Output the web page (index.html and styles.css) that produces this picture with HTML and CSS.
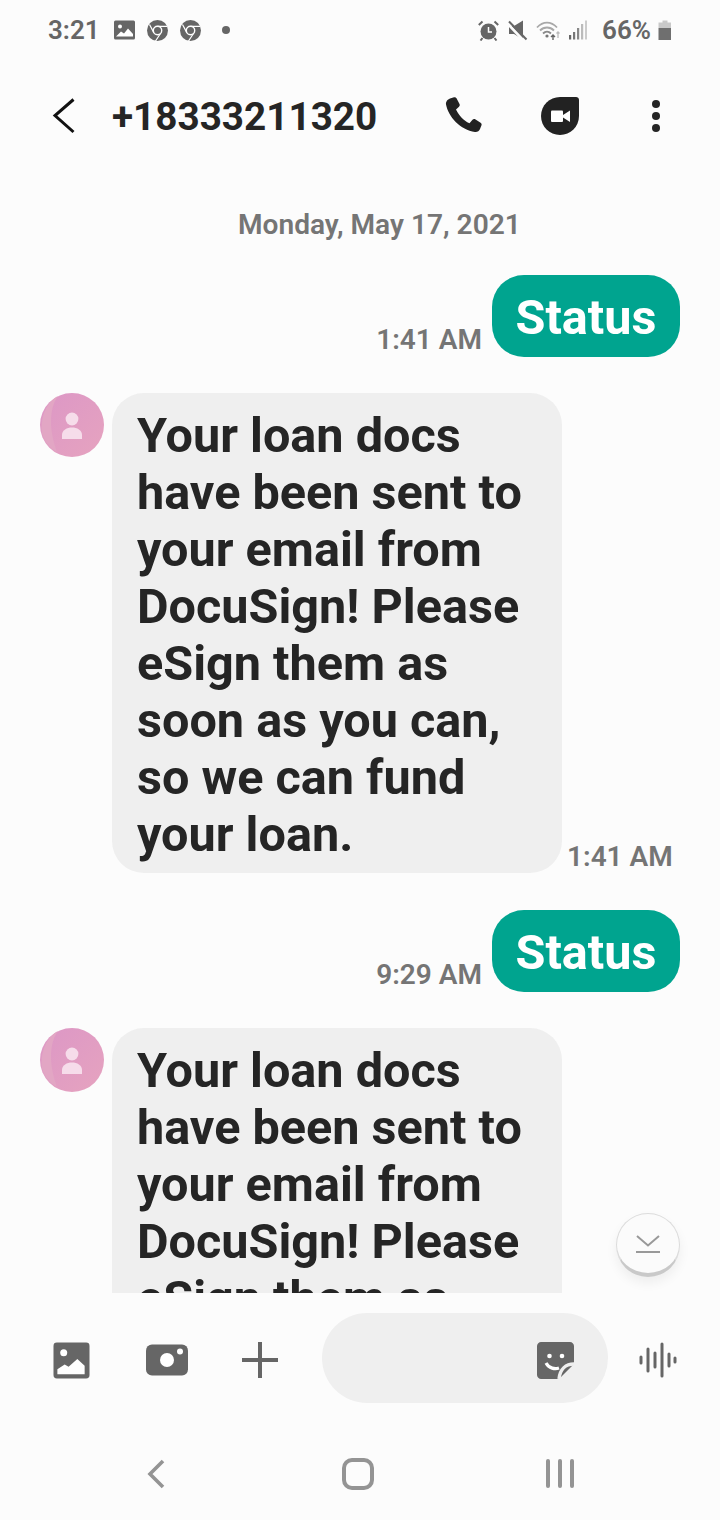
FILE: index.html
```html
<!DOCTYPE html>
<html lang="en">

<head>
    <meta charset="UTF-8">
    <meta name="viewport" content="width=device-width, initial-scale=1.0">
    <title>Messages</title>
    <link rel="stylesheet" href="styles.css">
</head>

<body>
    <div class="phone">

        <!-- status bar -->
        <div class="status-bar">
            <span class="clock">3:21</span>
            <svg class="notif notif-picture" width="21" height="20" viewBox="0 0 21 20">
                <rect width="21" height="19" y="0.5" rx="1.5" fill="#666" />
                <circle cx="6" cy="6.5" r="2" fill="#fff" />
                <path d="M2 16.5 L7 11.5 L10 13.5 L14 8.5 L19 14 V16.5 Z" fill="#fff" />
            </svg>
            <svg class="notif" width="21" height="21" viewBox="0 0 21 21">
                <use href="#chrome" />
            </svg>
            <svg class="notif" width="21" height="21" viewBox="0 0 21 21">
                <use href="#chrome" />
            </svg>
            <span class="dot"></span>
            <div class="status-right">
                <svg width="21" height="21" viewBox="0 0 21 21">
                    <circle cx="10.5" cy="11.5" r="8" fill="#666" />
                    <path d="M10.5 7 V12 H14" fill="none" stroke="#fff" stroke-width="1.5" />
                    <path d="M0.8 5 L4.5 1.5 M20.2 5 L16.5 1.5 M4.5 18 L2.5 20.5 M16.5 18 L18.5 20.5" stroke="#666" stroke-width="2" />
                </svg>
                <svg class="mute" width="20" height="21" viewBox="0 0 20 21">
                    <path d="M1 6 H6 L15 0.5 V19.5 L6 14 H1 Z" fill="#666" />
                    <path d="M0 4 L15 20" stroke="#fcfcfc" stroke-width="2.6" />
                    <path d="M1 1.5 L18.5 19.5" stroke="#666" stroke-width="2" />
                </svg>
                <svg class="wifi" width="26" height="21" viewBox="0 0 26 21">
                    <g fill="none" stroke="#a8a8a8" stroke-width="1.8">
                        <path d="M1 7.5 C7 1 15 1 21 7.5" />
                        <path d="M4 10.5 C8 6.5 14 6.5 18 10.5" />
                    </g>
                    <path d="M7 13.5 C9.5 11 12.5 11 15 13.5" fill="none" stroke="#8a8a8a" stroke-width="1.8" />
                    <circle cx="11" cy="16" r="1.6" fill="#777" />
                    <path d="M17 20 V15 M15 17 L17 15 L19 17" fill="none" stroke="#666" stroke-width="1.4" />
                    <path d="M22 18 V12 M20.5 13.5 L22 12 L23.5 13.5" fill="none" stroke="#bbb" stroke-width="1.3" />
                </svg>
                <svg class="signal" width="18" height="20" viewBox="0 0 18 20">
                    <rect x="0" y="15" width="2.2" height="4.5" fill="#666" />
                    <rect x="4" y="12" width="2.2" height="7.5" fill="#777" />
                    <rect x="8" y="8" width="2.2" height="11.5" fill="#888" />
                    <rect x="12" y="4" width="2.2" height="15.5" fill="#bbb" />
                    <rect x="16" y="0.5" width="2" height="19" fill="#ccc" />
                </svg>
                <span class="battery-text">66%</span>
                <svg class="battery" width="14" height="21" viewBox="0 0 14 21">
                    <path d="M4.5 0.5 H9.5 V2.5 H13 V8 H0.5 V2.5 H4.5 Z" fill="#c9c9c9" />
                    <rect x="0.5" y="8" width="12.5" height="12" fill="#6f6f6f" />
                </svg>
            </div>
        </div>

        <!-- header -->
        <div class="app-bar">
            <svg class="back" width="24" height="36" viewBox="0 0 24 36">
                <path d="M21.5 1.5 L3 17.5 L21.5 34" fill="none" stroke="#111" stroke-width="3" />
            </svg>
            <h1 class="number">+18333211320</h1>
            <svg class="call" width="38" height="38" viewBox="0 0 38 38">
                <path d="M5 1.5 L9 0.3 C10 0 11 0.4 11.5 1.3 L14.5 7 C15 8 14.8 9 14 9.7 L11 12.5 C13.5 18 18.5 23.5 24.5 26.3 L27.5 22.7 C28.2 21.9 29.3 21.7 30.2 22.3 L35.6 25.7 C36.5 26.3 36.9 27.3 36.5 28.3 L35 32 C34.2 34 32.2 35.3 30 35 C15.5 33 3.5 20 1 7.5 C0.6 5 2.5 2.3 5 1.5 Z" fill="#222" />
            </svg>
            <svg class="video" width="38" height="38" viewBox="0 0 38 38">
                <path d="M19 0 H35 C36.7 0 38 1.3 38 3 V19 C38 29.5 29.5 38 19 38 C8.5 38 0 29.5 0 19 C0 8.5 8.5 0 19 0 Z" fill="#222" />
                <rect x="10" y="13.5" width="12" height="11.5" rx="1" fill="#fff" />
                <path d="M22 18 L29 13.5 V25 L22 20.5 Z" fill="#fff" />
            </svg>
            <div class="more">
                <span></span><span></span><span></span>
            </div>
        </div>

        <!-- messages -->
        <div class="thread">
            <div class="date">Monday, May 17, 2021</div>

            <div class="msg-out">
                <span class="time">1:41 AM</span>
                <div class="bubble-out">Status</div>
            </div>

            <div class="msg-in">
                <svg class="avatar" width="64" height="64" viewBox="0 0 64 64">
                    <use href="#person" />
                </svg>
                <div class="bubble-in">Your loan docs<br>have been sent to<br>your email from<br>DocuSign! Please<br>eSign them as<br>soon as you can,<br>so we can fund<br>your loan.</div>
                <span class="time">1:41 AM</span>
            </div>

            <div class="msg-out">
                <span class="time">9:29 AM</span>
                <div class="bubble-out">Status</div>
            </div>

            <div class="msg-in">
                <svg class="avatar" width="64" height="64" viewBox="0 0 64 64">
                    <use href="#person" />
                </svg>
                <div class="bubble-in">Your loan docs<br>have been sent to<br>your email from<br>DocuSign! Please<br>eSign them as<br>soon as you can,<br>so we can fund<br>your loan.</div>
                <span class="time">1:41 AM</span>
            </div>

            <button class="scroll-down">
                <svg width="24" height="18" viewBox="0 0 24 18">
                    <path d="M1 1 L12 10.5 L23 1" fill="none" stroke="#999" stroke-width="2" />
                    <path d="M0 17 H24" stroke="#999" stroke-width="2" />
                </svg>
            </button>
        </div>

        <!-- composer -->
        <div class="composer">
            <svg class="gallery" width="37" height="37" viewBox="0 0 38 38">
                <rect width="37" height="37" x="0.5" y="0.5" rx="3.5" fill="#666" />
                <circle cx="11" cy="11" r="3.6" fill="#fff" />
                <path d="M4.5 33 V28 L12 23 L16 25.5 L25 17.5 L32.5 24.5 V33 Z" fill="#fff" />
            </svg>
            <svg class="camera" width="42" height="32" viewBox="0 0 42 32">
                <rect width="42" height="31" y="0.5" rx="6" fill="#666" />
                <circle cx="21" cy="16" r="7" fill="#fff" />
                <circle cx="34" cy="7.5" r="3" fill="#fff" />
            </svg>
            <svg class="plus" width="36" height="36" viewBox="0 0 36 36">
                <path d="M18 0 V36 M0 18 H36" stroke="#666" stroke-width="4" />
            </svg>
            <div class="input">
                <svg class="sticker" width="37" height="37" viewBox="0 0 37 37">
                    <path d="M4 0 H33 C35 0 37 2 37 4 V22 L22 37 H4 C2 37 0 35 0 33 V4 C0 2 2 0 4 0 Z" fill="#666" />
                    <circle cx="12.5" cy="14" r="2.3" fill="#fff" />
                    <circle cx="25" cy="14" r="2.3" fill="#fff" />
                    <path d="M9 21 C12 26.5 18 27.5 22 26" fill="none" stroke="#fff" stroke-width="3.2" />
                    <path d="M37 22 C29 22 23 27 22 37" fill="none" stroke="#eee" stroke-width="3.4" />
                </svg>
            </div>
            <svg class="voice" width="38" height="36" viewBox="0 0 38 36">
                <g stroke="#666" stroke-width="3" stroke-linecap="round" fill="none">
                    <path d="M2 15 V21 M9 7 V29 M16 11 V25 M23 2 V34 M30 12 V24 M36 16 V20" />
                </g>
            </svg>
        </div>

        <!-- navigation bar -->
        <div class="nav-bar">
            <svg width="18" height="30" viewBox="0 0 18 30">
                <path d="M16 2 L3 15 L16 28" fill="none" stroke="#949494" stroke-width="3.6" />
            </svg>
            <span class="nav-home"></span>
            <div class="nav-recent">
                <span></span><span></span><span></span>
            </div>
        </div>
    </div>

    <!-- shared icons -->
    <svg class="defs" width="0" height="0">
        <defs>
            <g id="chrome">
                <circle cx="10.5" cy="10.5" r="10.5" fill="#666" />
                <circle cx="10.5" cy="10.5" r="4.2" fill="none" stroke="#fff" stroke-width="1.4" />
                <path d="M10.5 6.3 H20 M6.8 12.6 L2.5 4.5 M13.5 13.5 L8.5 21" stroke="#fff" stroke-width="1.2" />
            </g>
            <linearGradient id="pink" x1="0" y1="0" x2="1" y2="1">
                <stop offset="0" stop-color="#dc97c6" />
                <stop offset="1" stop-color="#e6a3bf" />
            </linearGradient>
            <g id="person">
                <circle cx="32" cy="32" r="32" fill="url(#pink)" />
                <path d="M2 40 C0 22 8 8 18 3 C10 14 8 34 17 59 C9 55 4 48 2 40 Z" fill="#e2a6c4" />
                <circle cx="32" cy="26" r="6.4" fill="#f6dcea" />
                <path d="M22 46 V42 C22 37 27 34.5 32 34.5 C37 34.5 42 37 42 42 V46 Z" fill="#f6dcea" />
            </g>
        </defs>
    </svg>
</body>

</html>
```

FILE: styles.css
```css
body {
    margin: 0;
    background-color: #fcfcfc;
    font-family: Roboto, "Liberation Sans", sans-serif;
}

.defs {
    position: absolute;
}

.phone {
    width: 720px;
    height: 1520px;
    display: flex;
    flex-direction: column;
    overflow: hidden;
}

/* status bar */
.status-bar {
    height: 60px;
    flex: none;
    display: flex;
    align-items: center;
    padding: 0 48px;
    color: #666;
}

.clock {
    font-size: 26px;
    font-weight: 600;
    margin-right: 14px;
}

.notif {
    margin-right: 12px;
}

.dot {
    width: 8px;
    height: 8px;
    border-radius: 50%;
    background-color: #666;
    margin-left: 9px;
}

.status-right {
    margin-left: auto;
    display: flex;
    align-items: center;
}

.mute {
    margin-left: 9px;
}

.wifi {
    margin-left: 8px;
}

.signal {
    margin-left: 7px;
}

.battery-text {
    font-size: 26px;
    font-weight: 600;
    margin-left: 15px;
}

.battery {
    margin-left: 7px;
}

/* header */
.app-bar {
    height: 112px;
    flex: none;
    display: flex;
    align-items: center;
    padding-left: 52px;
}

.number {
    margin: 0 0 0 36px;
    width: 333px;
    font-size: 38.7px;
    font-weight: 700;
    color: #252525;
    white-space: nowrap;
}

.video {
    margin-left: 58px;
}

.more {
    display: flex;
    flex-direction: column;
    gap: 4px;
    margin-left: 73px;
}

.more span {
    width: 8px;
    height: 8px;
    border-radius: 50%;
    background-color: #252525;
}

/* messages */
.thread {
    position: relative;
    height: 1121px;
    flex: none;
    overflow: hidden;
}

.date {
    height: 103px;
    padding-top: 37px;
    box-sizing: border-box;
    padding-left: 238px;
    font-size: 28.1px;
    font-weight: 600;
    line-height: 32px;
    color: #757575;
}

.time {
    font-size: 28px;
    font-weight: 600;
    line-height: 32px;
    color: #757575;
    white-space: nowrap;
}

.msg-out {
    display: flex;
    justify-content: flex-end;
    align-items: flex-end;
    gap: 10px;
    padding-right: 40px;
    margin-bottom: 36px;
}

.msg-out .time {
    margin-bottom: 1px;
}

.bubble-out {
    width: 188px;
    height: 82px;
    border-radius: 32px;
    background-color: #00a48f;
    color: #fff;
    font-size: 48.6px;
    font-weight: 700;
    line-height: 85px;
    text-align: center;
}

.msg-in {
    display: flex;
    align-items: flex-end;
    padding-left: 40px;
    margin-bottom: 37px;
}

.avatar {
    align-self: flex-start;
    flex: none;
    margin-right: 8px;
}

.bubble-in {
    width: 450px;
    box-sizing: border-box;
    padding: 14px 25px 10px;
    border-radius: 32px;
    background-color: #efefef;
    color: #252525;
    font-size: 48.6px;
    font-weight: 700;
    line-height: 57px;
}

.msg-in .time {
    margin-left: 5px;
}

.scroll-down {
    position: absolute;
    left: 616px;
    top: 1041px;
    width: 64px;
    height: 64px;
    padding: 0;
    display: flex;
    align-items: center;
    justify-content: center;
    border: 1.5px solid #dcdcdc;
    border-bottom: 4px solid #c9c9c9;
    border-radius: 50%;
    background-color: #fbfbfb;
    box-shadow: 0 6px 12px rgba(0, 0, 0, 0.06);
}

/* composer */
.composer {
    height: 134px;
    flex: none;
    box-sizing: border-box;
    padding: 20px 0 20px 53px;
    display: flex;
    align-items: center;
}

.gallery {
    margin-right: 56px;
}

.camera {
    margin-right: 54px;
}

.plus {
    margin-right: 44px;
}

.input {
    width: 286px;
    height: 90px;
    margin-bottom: 4px;
    box-sizing: border-box;
    padding-right: 34px;
    border-radius: 45px;
    background-color: #efefef;
    display: flex;
    align-items: center;
    justify-content: flex-end;
}

.sticker {
    margin-top: 4px;
}

.voice {
    margin-left: 31px;
}

/* navigation bar */
.nav-bar {
    flex: 1;
    display: flex;
    align-items: center;
    padding-left: 147px;
}

.nav-home {
    width: 32px;
    height: 32px;
    box-sizing: border-box;
    border: 4px solid #949494;
    border-radius: 10px;
    margin-left: 177px;
}

.nav-recent {
    display: flex;
    gap: 8px;
    margin-left: 172px;
}

.nav-recent span {
    width: 4px;
    height: 29px;
    border-radius: 2px;
    background-color: #949494;
}
```
